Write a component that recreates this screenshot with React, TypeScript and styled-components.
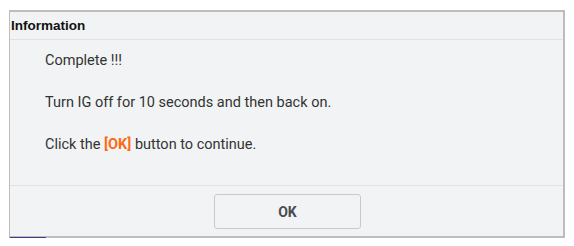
import React from "react";
import styled, { createGlobalStyle } from "styled-components";

const Global = createGlobalStyle`
  html, body { margin: 0; padding: 0; background: #ffffff; }
  body { font-family: Roboto, "Liberation Sans", Arial, sans-serif; }
`;

const Page = styled.div`
  padding: 10px 0 0 9px;
`;

const Dialog = styled.div`
  width: 553px;
  background: #f1f3f4;
  border: 1px solid #bdbdbd;
  border-top-width: 2px;
  border-right-width: 2px;
  border-bottom-width: 2px;
  display: flex;
  flex-direction: column;
`;

const Header = styled.div`
  height: 27px;
  display: flex;
  align-items: center;
  padding-left: 1px;
  font-family: "Liberation Sans", Arial, sans-serif;
  font-weight: 700;
  font-size: 13.5px;
  color: #111;
  border-bottom: 1px solid #e0e2e4;
`;

const Body = styled.div`
  height: 146px;
  padding: 11px 0 0 35px;
  box-sizing: border-box;
  display: flex;
  flex-direction: column;
  gap: 22px;
  border-bottom: 1px solid #e0e2e4;
`;

const Line = styled.div`
  font-size: 14.5px;
  line-height: 20px;
  color: #333;
`;

const Accent = styled.span`
  color: #ff6a13;
  font-weight: 700;
`;

const Footer = styled.div`
  display: flex;
  justify-content: center;
  padding: 8px 0 7px;
`;

const Button = styled.button`
  width: 147px;
  height: 35px;
  margin-left: 2px;
  background: #f2f3f5;
  border: 1px solid #c6cacf;
  border-radius: 3px;
  font-family: Roboto, "Liberation Sans", Arial, sans-serif;
  font-weight: 700;
  font-size: 14px;
  color: #474c52;
  cursor: pointer;
`;

const Underbar = styled.div`
  width: 36px;
  height: 1px;
  margin: -1px 0 0 1px;
  background: #3b3f8c;
`;

export default function App() {
  return (
    <>
      <Global />
      <Page>
        <Dialog>
          <Header>Information</Header>
          <Body>
            <Line>Complete !!!</Line>
            <Line>Turn IG off for 10 seconds and then back on.</Line>
            <Line>
              Click the <Accent>[OK]</Accent> button to continue.
            </Line>
          </Body>
          <Footer>
            <Button>OK</Button>
          </Footer>
        </Dialog>
        <Underbar />
      </Page>
    </>
  );
}
